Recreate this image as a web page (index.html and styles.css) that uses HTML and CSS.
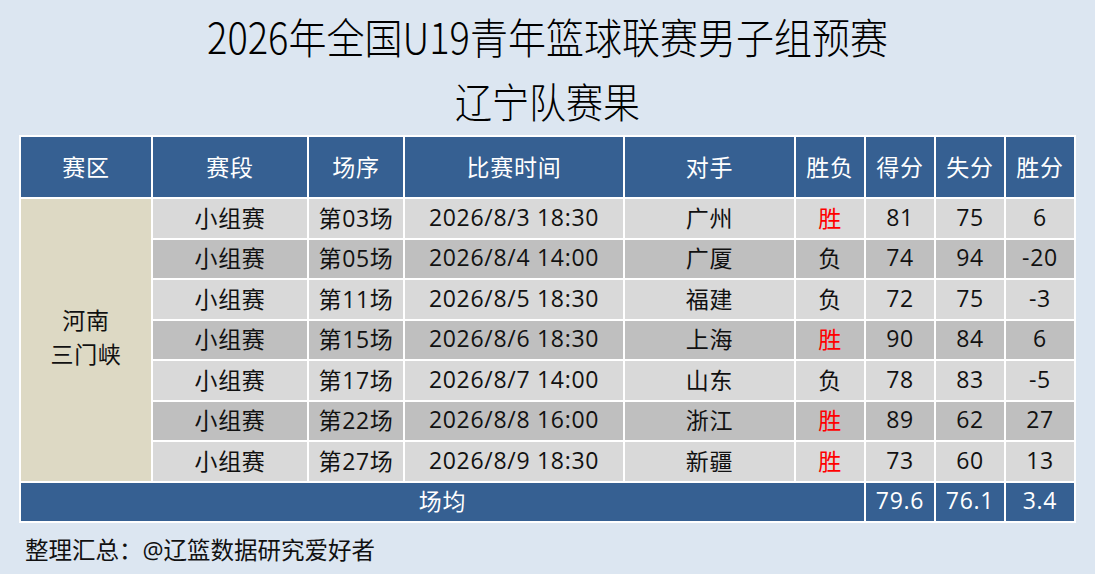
FILE: index.html
```html
<!DOCTYPE html>
<html lang="zh-CN">
<head>
<meta charset="utf-8">
<title>辽宁队赛果</title>
<link rel="stylesheet" href="styles.css">
</head>
<body>
<div class="page">
  <h1 class="title">2026年全国U19青年篮球联赛男子组预赛</h1>
  <h2 class="subtitle">辽宁队赛果</h2>
  <table class="results">
    <colgroup>
      <col class="c-zone"><col class="c-stage"><col class="c-no"><col class="c-time"><col class="c-opp">
      <col class="c-wl"><col class="c-num"><col class="c-num"><col class="c-num">
    </colgroup>
    <thead>
      <tr class="head">
        <th>赛区</th><th>赛段</th><th>场序</th><th>比赛时间</th><th>对手</th><th>胜负</th><th>得分</th><th>失分</th><th>胜分</th>
      </tr>
    </thead>
    <tbody>
      <tr class="light">
        <td class="zone" rowspan="7">河南<br>三门峡</td>
        <td>小组赛</td><td>第03场</td><td>2026/8/3 18:30</td><td>广州</td><td class="win">胜</td><td>81</td><td>75</td><td>6</td>
      </tr>
      <tr class="dark">
        <td>小组赛</td><td>第05场</td><td>2026/8/4 14:00</td><td>广厦</td><td>负</td><td>74</td><td>94</td><td>-20</td>
      </tr>
      <tr class="light">
        <td>小组赛</td><td>第11场</td><td>2026/8/5 18:30</td><td>福建</td><td>负</td><td>72</td><td>75</td><td>-3</td>
      </tr>
      <tr class="dark">
        <td>小组赛</td><td>第15场</td><td>2026/8/6 18:30</td><td>上海</td><td class="win">胜</td><td>90</td><td>84</td><td>6</td>
      </tr>
      <tr class="light">
        <td>小组赛</td><td>第17场</td><td>2026/8/7 14:00</td><td>山东</td><td>负</td><td>78</td><td>83</td><td>-5</td>
      </tr>
      <tr class="dark">
        <td>小组赛</td><td>第22场</td><td>2026/8/8 16:00</td><td>浙江</td><td class="win">胜</td><td>89</td><td>62</td><td>27</td>
      </tr>
      <tr class="light">
        <td>小组赛</td><td>第27场</td><td>2026/8/9 18:30</td><td>新疆</td><td class="win">胜</td><td>73</td><td>60</td><td>13</td>
      </tr>
    </tbody>
    <tfoot>
      <tr class="avg">
        <td class="avg-label" colspan="6">场均</td><td>79.6</td><td>76.1</td><td>3.4</td>
      </tr>
    </tfoot>
  </table>
  <p class="credit">整理汇总：@辽篮数据研究爱好者</p>
</div>
</body>
</html>
```

FILE: styles.css
```css
html, body {
  margin: 0;
  padding: 0;
  background: #dce6f1;
}

.page {
  width: 1095px;
  height: 574px;
  box-sizing: border-box;
  padding: 4px 0 0 19px;
  font-family: "Open Sans", "Noto Sans CJK SC", sans-serif;
  color: #111;
  overflow: hidden;
}

.title,
.subtitle {
  margin: 0;
  width: 1057px;
  text-align: center;
  font-family: "Noto Sans CJK SC", sans-serif;
  font-weight: 300;
  color: #000;
  transform: scaleY(1.12);
}

.title {
  font-size: 38px;
  line-height: 64px;
}

.subtitle {
  font-size: 37px;
  line-height: 64px;
}

.results {
  margin-top: 3px;
  border-collapse: collapse;
  table-layout: fixed;
  width: 1057px;
  border: 2px solid #fff;
  font-size: 23px;
  letter-spacing: 0.7px;
}

.c-zone { width: 132px; }
.c-stage { width: 156px; }
.c-no { width: 96px; }
.c-time { width: 220px; }
.c-opp { width: 171px; }
.c-wl { width: 70px; }
.c-num { width: 70px; }

.results th,
.results td {
  border: 2px solid #fff;
  padding: 0 0 3px;
  text-align: center;
  font-weight: 400;
  white-space: nowrap;
}

.head th {
  height: 57px;
  background: #366092;
  color: #fff;
}

tbody td {
  height: 35.5px;
}

.light td {
  background: #d9d9d9;
}

.dark td {
  background: #bfbfbf;
}

.results td.zone {
  background: #ddd9c4;
  line-height: 34px;
  padding-bottom: 6px;
}

.win {
  color: #ff0000;
}

.avg td {
  height: 35px;
  background: #366092;
  color: #fff;
}

.credit {
  margin: 12px 0 0 6px;
  font-size: 23.5px;
  line-height: 30px;
  color: #111;
}
```
